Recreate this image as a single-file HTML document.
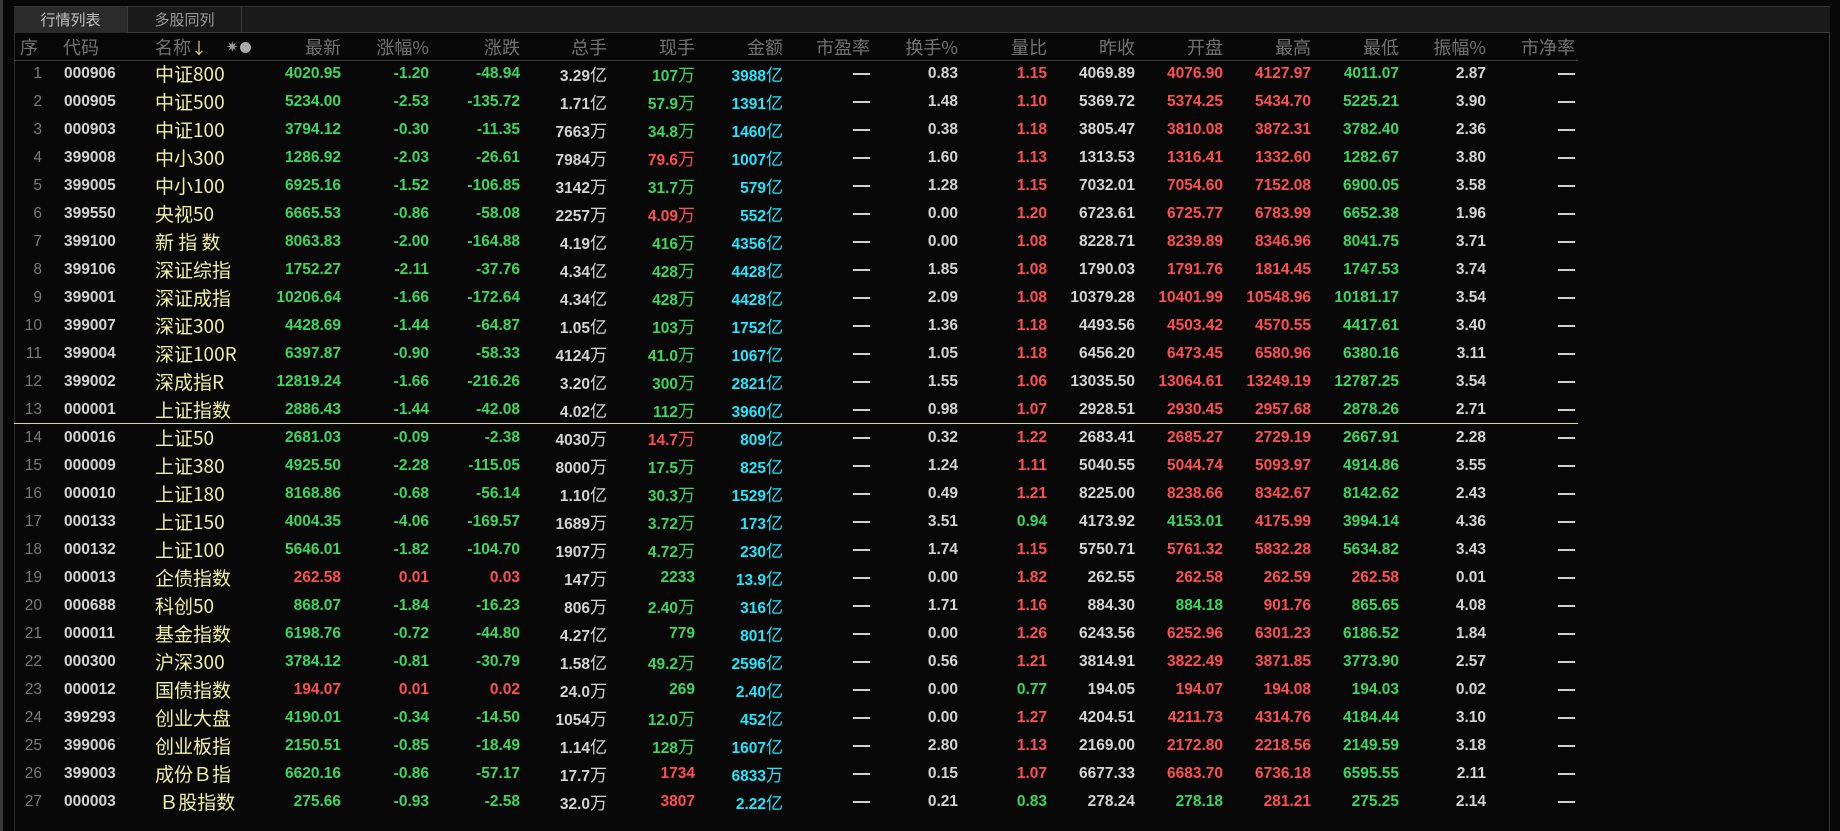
<!DOCTYPE html>
<html><head><meta charset="utf-8">
<style>
*{margin:0;padding:0;box-sizing:border-box}
html,body{width:1840px;height:831px;background:#070707;overflow:hidden}
body{font-family:"Liberation Sans","Noto Sans CJK SC",sans-serif;position:relative}
.lb{position:absolute;left:0;top:0;width:3px;height:831px;background:#3a3a3a}
.panel{position:absolute;left:14px;top:6px;width:1816px;height:825px;border-left:1px solid #2e2e2e;border-right:1px solid #3a3a3a;border-top:1px solid #2e2e2e}
.tabs{position:absolute;left:14px;top:6px;width:1816px;height:27px;background:#1a1a1a;border-bottom:1px solid #3a3a3a;border-top:1px solid #333}
.tab{position:absolute;top:0;height:26px;font-size:15px;color:#9a9a9a;text-align:center;line-height:25px;font-family:"Noto Sans CJK SC",sans-serif;border-right:1px solid #3a3a3a}
.t1{left:0;width:114px;background:#2b2b2b;color:#c0c0c0}
.t2{left:114px;width:114px}
.hdr,.row{position:absolute;left:0;height:28px;width:1840px}
.hdr{top:33px;height:28px}
.hline{position:absolute;left:14px;width:1564px;height:1px;background:#3c3c3c}
.c{position:absolute;top:0;height:28px;line-height:28px;white-space:nowrap;text-align:right}
.hdr .c{font-family:"Noto Sans CJK SC",sans-serif;font-size:18px;color:#727272;line-height:28px}
.row .c{font-size:15.5px;font-weight:bold}
.u{font-weight:normal;font-family:"Noto Sans CJK SC",sans-serif;font-size:17px}
.nm{font-family:"Noto Sans CJK SC",sans-serif!important;font-weight:normal!important;font-size:19px!important;color:#f2f2a0;text-align:left!important}
.seq{color:#7a7a7a;font-weight:normal!important}
.cd{color:#d4d4d4;text-align:left!important}
.g{color:#3ad85c}.r{color:#ff4f4f}.w{color:#d4d4d4}.cy{color:#1ee8ff}
.dash{display:inline-block;width:17px;height:2px;background:#d0d0d0;vertical-align:middle}
</style></head><body>
<div class="lb"></div>
<div class="panel"></div>
<div class="tabs"><div class="tab t1">行情列表</div><div class="tab t2">多股同列</div></div>
<div class="hdr">
<div class="c" style="left:20px;width:28px;text-align:left">序</div>
<div class="c" style="left:63px;text-align:left">代码</div>
<div class="c" style="left:155px;text-align:left">名称<span style="color:#f0e080;font-size:16px">↓</span></div>
<div class="c" style="left:226px;text-align:left;font-size:13px;color:#999"><span style="font-size:15px">✷</span><span style="display:inline-block;width:11px;height:11px;border-radius:50%;background:#aaa;margin-left:1px;vertical-align:-1px"></span></div>
</div>
<div class="hline" style="top:60px"></div>
<div class="hline" style="top:423px;background:#d8d890"></div>
<div id="rows"></div>
<script>
var rights=[341,429,520,607,695,783,870,958,1047,1135,1223,1311,1399,1486,1575];
var heads=["最新","涨幅%","涨跌","总手","现手","金额","市盈率","换手%","量比","昨收","开盘","最高","最低","振幅%","市净率"];
var h=document.querySelector('.hdr');
heads.forEach(function(t,i){var d=document.createElement('div');d.className='c';d.style.right=(1840-rights[i])+'px';d.textContent=t;h.appendChild(d);});
// code,name, last,pct,chg,vol,volU,cur,curU,amt,amtU,hs,lb,prev,open,high,low,amp, colors: last, cur, lb, open, high, low
var D=[
["000906","中证800","4020.95","-1.20","-48.94","3.29","亿","107","万","3988","亿","0.83","1.15","4069.89","4076.90","4127.97","4011.07","2.87","g","g","r","r","r","g"],
["000905","中证500","5234.00","-2.53","-135.72","1.71","亿","57.9","万","1391","亿","1.48","1.10","5369.72","5374.25","5434.70","5225.21","3.90","g","g","r","r","r","g"],
["000903","中证100","3794.12","-0.30","-11.35","7663","万","34.8","万","1460","亿","0.38","1.18","3805.47","3810.08","3872.31","3782.40","2.36","g","g","r","r","r","g"],
["399008","中小300","1286.92","-2.03","-26.61","7984","万","79.6","万","1007","亿","1.60","1.13","1313.53","1316.41","1332.60","1282.67","3.80","g","r","r","r","r","g"],
["399005","中小100","6925.16","-1.52","-106.85","3142","万","31.7","万","579","亿","1.28","1.15","7032.01","7054.60","7152.08","6900.05","3.58","g","g","r","r","r","g"],
["399550","央视50","6665.53","-0.86","-58.08","2257","万","4.09","万","552","亿","0.00","1.20","6723.61","6725.77","6783.99","6652.38","1.96","g","r","r","r","r","g"],
["399100","新 指 数","8063.83","-2.00","-164.88","4.19","亿","416","万","4356","亿","0.00","1.08","8228.71","8239.89","8346.96","8041.75","3.71","g","g","r","r","r","g"],
["399106","深证综指","1752.27","-2.11","-37.76","4.34","亿","428","万","4428","亿","1.85","1.08","1790.03","1791.76","1814.45","1747.53","3.74","g","g","r","r","r","g"],
["399001","深证成指","10206.64","-1.66","-172.64","4.34","亿","428","万","4428","亿","2.09","1.08","10379.28","10401.99","10548.96","10181.17","3.54","g","g","r","r","r","g"],
["399007","深证300","4428.69","-1.44","-64.87","1.05","亿","103","万","1752","亿","1.36","1.18","4493.56","4503.42","4570.55","4417.61","3.40","g","g","r","r","r","g"],
["399004","深证100R","6397.87","-0.90","-58.33","4124","万","41.0","万","1067","亿","1.05","1.18","6456.20","6473.45","6580.96","6380.16","3.11","g","g","r","r","r","g"],
["399002","深成指R","12819.24","-1.66","-216.26","3.20","亿","300","万","2821","亿","1.55","1.06","13035.50","13064.61","13249.19","12787.25","3.54","g","g","r","r","r","g"],
["000001","上证指数","2886.43","-1.44","-42.08","4.02","亿","112","万","3960","亿","0.98","1.07","2928.51","2930.45","2957.68","2878.26","2.71","g","g","r","r","r","g"],
["000016","上证50","2681.03","-0.09","-2.38","4030","万","14.7","万","809","亿","0.32","1.22","2683.41","2685.27","2729.19","2667.91","2.28","g","r","r","r","r","g"],
["000009","上证380","4925.50","-2.28","-115.05","8000","万","17.5","万","825","亿","1.24","1.11","5040.55","5044.74","5093.97","4914.86","3.55","g","g","r","r","r","g"],
["000010","上证180","8168.86","-0.68","-56.14","1.10","亿","30.3","万","1529","亿","0.49","1.21","8225.00","8238.66","8342.67","8142.62","2.43","g","g","r","r","r","g"],
["000133","上证150","4004.35","-4.06","-169.57","1689","万","3.72","万","173","亿","3.51","0.94","4173.92","4153.01","4175.99","3994.14","4.36","g","g","g","g","r","g"],
["000132","上证100","5646.01","-1.82","-104.70","1907","万","4.72","万","230","亿","1.74","1.15","5750.71","5761.32","5832.28","5634.82","3.43","g","g","r","r","r","g"],
["000013","企债指数","262.58","0.01","0.03","147","万","2233","","13.9","亿","0.00","1.82","262.55","262.58","262.59","262.58","0.01","r","g","r","r","r","r"],
["000688","科创50","868.07","-1.84","-16.23","806","万","2.40","万","316","亿","1.71","1.16","884.30","884.18","901.76","865.65","4.08","g","g","r","g","r","g"],
["000011","基金指数","6198.76","-0.72","-44.80","4.27","亿","779","","801","亿","0.00","1.26","6243.56","6252.96","6301.23","6186.52","1.84","g","g","r","r","r","g"],
["000300","沪深300","3784.12","-0.81","-30.79","1.58","亿","49.2","万","2596","亿","0.56","1.21","3814.91","3822.49","3871.85","3773.90","2.57","g","g","r","r","r","g"],
["000012","国债指数","194.07","0.01","0.02","24.0","万","269","","2.40","亿","0.00","0.77","194.05","194.07","194.08","194.03","0.02","r","g","g","r","r","g"],
["399293","创业大盘","4190.01","-0.34","-14.50","1054","万","12.0","万","452","亿","0.00","1.27","4204.51","4211.73","4314.76","4184.44","3.10","g","g","r","r","r","g"],
["399006","创业板指","2150.51","-0.85","-18.49","1.14","亿","128","万","1607","亿","2.80","1.13","2169.00","2172.80","2218.56","2149.59","3.18","g","g","r","r","r","g"],
["399003","成份Ｂ指","6620.16","-0.86","-57.17","17.7","万","1734","","6833","万","0.15","1.07","6677.33","6683.70","6736.18","6595.55","2.11","g","r","r","r","r","g"],
["000003","Ｂ股指数","275.66","-0.93","-2.58","32.0","万","3807","","2.22","亿","0.21","0.83","278.24","278.18","281.21","275.25","2.14","g","r","g","g","r","g"]
];
var html='';
D.forEach(function(d,i){
 var top=60+i*28;
 var s='<div class="row" style="top:'+top+'px">';
 s+='<div class="c seq" style="right:'+(1840-42)+'px">'+(i+1)+'</div>';
 s+='<div class="c cd" style="left:64px">'+d[0]+'</div>';
 var nm=d[1];if(nm.charAt(0)=='Ｂ')nm='&nbsp;'+nm;
 s+='<div class="c nm" style="left:155px">'+nm+'</div>';
 function cell(ci,txt,col){s+='<div class="c '+col+'" style="right:'+(1840-rights[ci])+'px">'+txt+'</div>';}
 var lc=d[18];
 cell(0,d[2],lc);cell(1,d[3],lc);cell(2,d[4],lc);
 cell(3,d[5]+'<span class="u">'+d[6]+'</span>','w');
 cell(4,d[7]+(d[8]?'<span class="u">'+d[8]+'</span>':''),d[19]);
 cell(5,d[9]+'<span class="u">'+d[10]+'</span>','cy');
 cell(6,'<span class="dash"></span>','w');
 cell(7,d[11],'w');cell(8,d[12],d[20]);cell(9,d[13],'w');
 cell(10,d[14],d[21]);cell(11,d[15],d[22]);cell(12,d[16],d[23]);
 cell(13,d[17],'w');cell(14,'<span class="dash"></span>','w');
 s+='</div>';html+=s;
});
document.getElementById('rows').innerHTML=html;
</script>
</body></html>
